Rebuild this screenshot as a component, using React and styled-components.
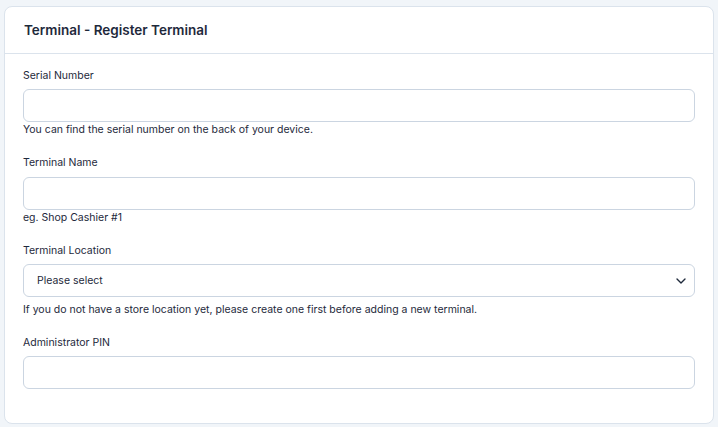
import React from "react";
import styled, { createGlobalStyle } from "styled-components";

const GlobalStyle = createGlobalStyle`
  html, body {
    margin: 0;
    background: #f1f5f9;
    font-family: Inter, "Noto Sans", sans-serif;
    color: #1e293b;
  }
`;

const Page = styled.div`
  padding: 6px 4px 4px 4px;
`;

const Card = styled.div`
  background: #fff;
  border: 1px solid #dbe3ec;
  border-radius: 8px;
`;

const CardHeader = styled.div`
  height: 46px;
  padding: 0 19px;
  display: flex;
  align-items: center;
  border-bottom: 1px solid #dbe3ec;
`;

const Title = styled.h2`
  margin: 0;
  font-size: 13.5px;
  font-weight: 600;
  color: #1e293b;
`;

const CardBody = styled.div`
  padding: 12.5px 18px 18px 18px;
`;

const Field = styled.div`
  display: flex;
  flex-direction: column;
  margin-bottom: 16px;
`;

const Label = styled.label`
  font-size: 10.5px;
  line-height: 18px;
  color: #1e293b;
  margin-bottom: 4.5px;
`;

const Input = styled.input`
  box-sizing: border-box;
  height: 33px;
  width: 100%;
  border: 1px solid #cbd5e1;
  border-radius: 6px;
  background: #fff;
  padding: 0 12px;
  font-family: inherit;
  font-size: 10.5px;
  outline: none;
`;

const SelectWrap = styled.div`
  position: relative;
  margin-bottom: 4.5px;
`;

const Select = styled.select`
  box-sizing: border-box;
  height: 33px;
  width: 100%;
  border: 1px solid #cbd5e1;
  border-radius: 6px;
  background: #fff;
  padding: 0 13px;
  font-family: inherit;
  font-size: 10.5px;
  color: #1e293b;
  appearance: none;
  outline: none;
`;

const Chevron = styled.svg`
  position: absolute;
  right: 6px;
  top: 50%;
  transform: translateY(-50%);
  pointer-events: none;
`;

const Help = styled.div`
  font-size: 10.5px;
  line-height: 16px;
  color: #1e293b;
`;

const App = () => {
  return (
    <>
      <GlobalStyle />
      <Page>
        <Card>
          <CardHeader>
            <Title>Terminal - Register Terminal</Title>
          </CardHeader>
          <CardBody>
            <Field>
              <Label>Serial Number</Label>
              <Input type="text" />
              <Help>You can find the serial number on the back of your device.</Help>
            </Field>
            <Field>
              <Label>Terminal Name</Label>
              <Input type="text" />
              <Help>eg. Shop Cashier #1</Help>
            </Field>
            <Field>
              <Label>Terminal Location</Label>
              <SelectWrap>
                <Select defaultValue="">
                  <option value="">Please select</option>
                </Select>
                <Chevron width="16" height="16" viewBox="0 0 24 24" fill="none" stroke="#1e293b" strokeWidth="2" strokeLinecap="round" strokeLinejoin="round">
                  <path d="M6 9l6 6 6-6" />
                </Chevron>
              </SelectWrap>
              <Help>
                If you do not have a store location yet, please create one first before adding a new terminal.
              </Help>
            </Field>
            <Field>
              <Label>Administrator PIN</Label>
              <Input type="password" />
            </Field>
          </CardBody>
        </Card>
      </Page>
    </>
  );
};

export default App;
